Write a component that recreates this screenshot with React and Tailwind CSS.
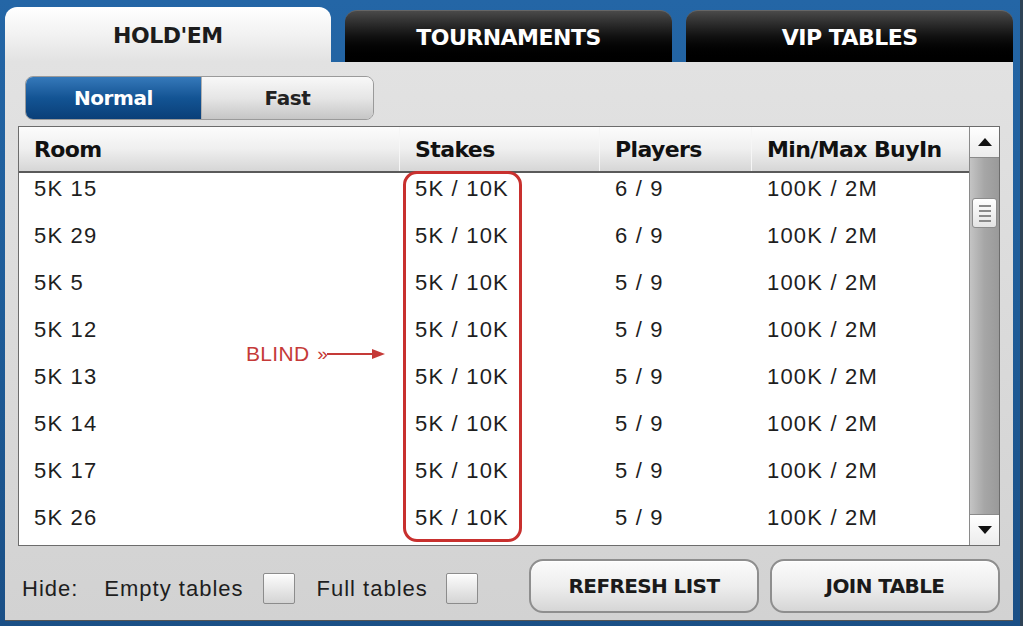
const rows = [
  { room: '5K 15', players: '6 / 9' },
  { room: '5K 29', players: '6 / 9' },
  { room: '5K 5', players: '5 / 9' },
  { room: '5K 12', players: '5 / 9' },
  { room: '5K 13', players: '5 / 9' },
  { room: '5K 14', players: '5 / 9' },
  { room: '5K 17', players: '5 / 9' },
  { room: '5K 26', players: '5 / 9' },
];

const bold = { fontFamily: '"DejaVu Sans", Verdana, sans-serif' };

const Tab = ({ label, active, width }) => (
  <div
    className={`flex items-center justify-center rounded-t-[12px] font-bold text-[22px] tracking-[-0.5px] ${
      active
        ? 'h-[55px] bg-gradient-to-b from-white via-[#f2f2f2] to-[#e2e2e2] text-[#1c1c1c]'
        : 'h-[52px] bg-gradient-to-b from-[#4a4a4a] via-[#111111] to-black text-white border-t border-[#666]'
    }`}
    style={{ ...bold, width }}
  >
    <span className={active ? 'pt-[2px]' : 'pt-[1px]'}>{label}</span>
  </div>
);

const Checkbox = () => (
  <div className="w-[32px] h-[31px] rounded-[2px] border border-[#8c8c8c] bg-gradient-to-b from-[#fdfdfd] to-[#d4d4d4] shadow-[inset_0_1px_0_#fff]" />
);

const Button = ({ label }) => (
  <button
    className="w-[230px] h-[54px] rounded-[14px] border-2 border-[#8e8e8e] bg-gradient-to-b from-[#fbfbfb] via-[#eeeeee] to-[#d6d6d6] shadow-[inset_0_1px_0_#fff] flex items-center justify-center text-[20px] font-bold text-[#1a1a1a] tracking-[-0.6px]"
    style={bold}
  >
    {label}
  </button>
);

const Arrow = ({ down }) => (
  <div className="h-[30px] flex items-center justify-center bg-gradient-to-b from-white to-[#ececec]">
    <svg width="14" height="8" viewBox="0 0 14 8">
      {down ? <path d="M0 0 H14 L7 8 Z" fill="#111" /> : <path d="M0 8 H14 L7 0 Z" fill="#111" />}
    </svg>
  </div>
);

export default function App() {
  return (
    <div
      className="w-[1023px] h-[626px] overflow-hidden flex flex-col bg-gradient-to-b from-[#2466a6] via-[#1e5c98] to-[#1a4f86] pl-[5px] pr-[7px] pb-[5px] border-r-[3px] border-[#2f4356]"
      style={{ fontFamily: '"Liberation Sans", Arial, sans-serif' }}
    >
      {/* tabs */}
      <div className="h-[62px] flex items-end gap-[14px] shrink-0">
        <Tab label="HOLD'EM" active width={327} />
        <Tab label="TOURNAMENTS" width={329} />
        <Tab label="VIP TABLES" width={328} />
      </div>

      {/* panel */}
      <div className="flex-1 flex flex-col bg-gradient-to-b from-[#e2e2e2] to-[#d2d2d2] px-[13px] border-b border-[#555]">
        <div className="flex pt-[14px] pl-[7px] h-[58px] shrink-0">
          <div className="flex h-[44px] rounded-[8px] overflow-hidden border border-[#9a9a9a]">
            <div
              className="w-[175px] flex items-center justify-center bg-gradient-to-b from-[#3579ba] via-[#135494] to-[#0a3f78] text-white text-[20px] font-bold tracking-[-0.4px]"
              style={bold}
            >
              Normal
            </div>
            <div
              className="w-[172px] flex items-center justify-center bg-gradient-to-b from-[#f8f8f8] via-[#e6e6e6] to-[#c6c6c6] text-[#222] text-[20px] font-bold tracking-[-0.4px] border-l border-[#b0b0b0]"
              style={bold}
            >
              Fast
            </div>
          </div>
        </div>

        {/* table */}
        <div className="mt-[6px] h-[420px] shrink-0 border border-[#6c6c6c] bg-white flex">
          <div className="flex-1 flex flex-col">
            <div
              className="h-[46px] shrink-0 flex bg-gradient-to-b from-[#fcfcfc] via-[#efefef] to-[#d6d6d6] border-b-2 border-[#5a5a5a] text-[22px] font-bold text-[#111] tracking-[-0.6px]"
              style={bold}
            >
              <div className="w-[381px] pl-[15px] flex items-center border-r border-[#f6f6f6]">Room</div>
              <div className="w-[200px] pl-[15px] flex items-center border-r border-[#f6f6f6]">Stakes</div>
              <div className="w-[152px] pl-[15px] flex items-center border-r border-[#f6f6f6]">Players</div>
              <div className="flex-1 pl-[15px] flex items-center">Min/Max BuyIn</div>
            </div>
            <div className="relative flex-1">
              {rows.map((r) => (
                <div key={r.room} className="h-[47px] pt-[5px] flex text-[22px] leading-[22px] text-[#1e1e1e] tracking-[1.2px]">
                  <div className="w-[381px] pl-[15px]">{r.room}</div>
                  <div className="w-[200px] pl-[15px]">5K / 10K</div>
                  <div className="w-[152px] pl-[15px]">{r.players}</div>
                  <div className="flex-1 pl-[15px]">100K / 2M</div>
                </div>
              ))}
              <div className="absolute left-[384px] top-[-2px] w-[119px] h-[371px] rounded-[14px] border-[3px] border-[#c8302e]" />
              <div className="absolute left-[227px] top-[170px] flex items-center text-[#c53a38] text-[21px] leading-[22px] tracking-[0.3px]">
                <span>BLIND</span>
                <span className="ml-[8px] text-[19px]">»</span>
                <svg width="58" height="12" viewBox="0 0 58 12" className="-ml-[1px]">
                  <path d="M0 6 H48" stroke="#c53a38" strokeWidth="2" />
                  <path d="M45 1 L58 6 L45 11 Z" fill="#c53a38" />
                </svg>
              </div>
            </div>
          </div>

          {/* scrollbar */}
          <div className="w-[30px] flex flex-col border-l border-[#8a8a8a]">
            <Arrow />
            <div className="flex-1 relative bg-gradient-to-r from-[#c4c4c4] via-[#a6a6a6] to-[#9a9a9a] border-y border-[#8a8a8a]">
              <div className="absolute left-[2px] right-[2px] top-[40px] h-[30px] rounded-[3px] border border-[#8c8c8c] bg-gradient-to-b from-white to-[#e4e4e4] flex flex-col items-center justify-center gap-[3px]">
                <div className="w-[12px] h-[2px] bg-[#8a8a8a]" />
                <div className="w-[12px] h-[2px] bg-[#8a8a8a]" />
                <div className="w-[12px] h-[2px] bg-[#8a8a8a]" />
                <div className="w-[12px] h-[2px] bg-[#8a8a8a]" />
              </div>
            </div>
            <Arrow down />
          </div>
        </div>

        {/* footer */}
        <div className="flex-1 flex items-center pl-[4px] pt-[10px] text-[22px] text-[#1e1e1e] tracking-[1px]">
          <span>Hide:</span>
          <span className="ml-[26px]">Empty tables</span>
          <div className="ml-[19px]"><Checkbox /></div>
          <span className="ml-[22px]">Full tables</span>
          <div className="ml-[18px]"><Checkbox /></div>
          <div className="ml-auto flex gap-[11px] mt-[-5px]">
            <Button label="REFRESH LIST" />
            <Button label="JOIN TABLE" />
          </div>
        </div>
      </div>
    </div>
  );
}
